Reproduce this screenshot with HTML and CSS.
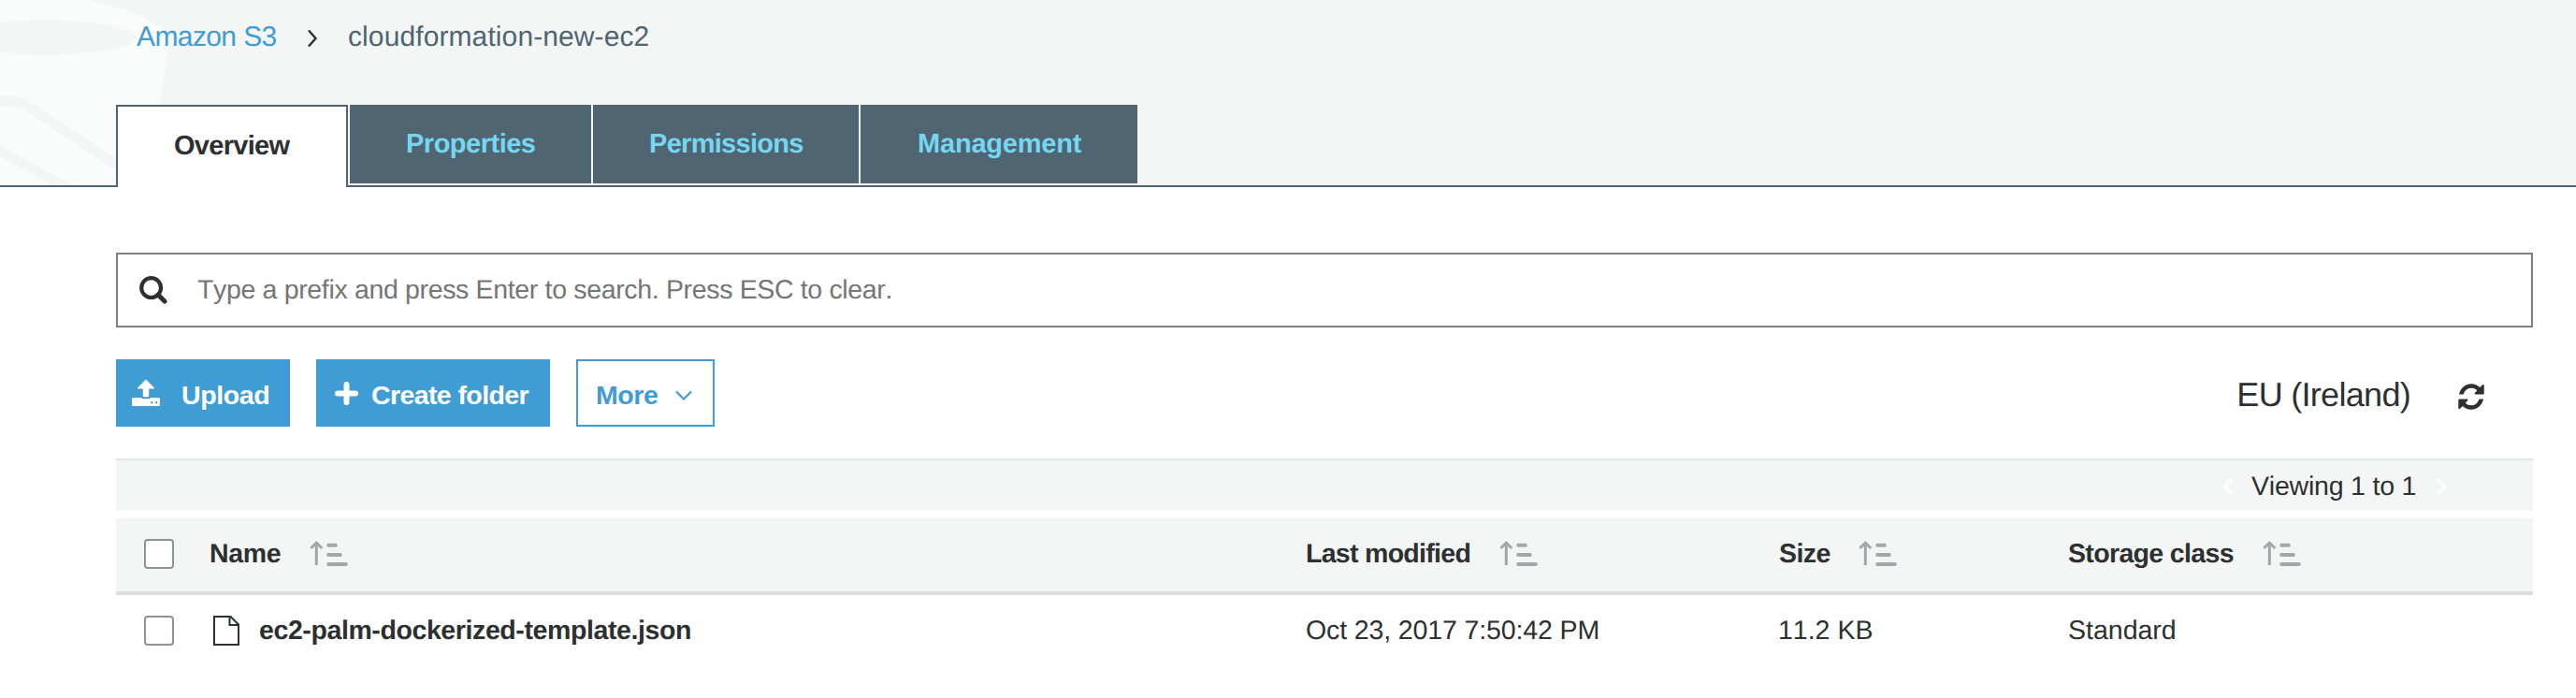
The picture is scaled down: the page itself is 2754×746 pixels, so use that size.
FILE: index.html
```html
<!DOCTYPE html>
<html lang="en">
<head>
<meta charset="utf-8">
<title>Amazon S3</title>
<link rel="stylesheet" href="styles.css">
</head>
<body>
<svg class="defs" width="0" height="0" aria-hidden="true">
  <symbol id="sort" viewBox="0 0 42 28">
    <path d="M7.3 2.5V26M1.3 8 7.3 2.2 13.3 8" fill="none" stroke="#a1a8a8" stroke-width="3"/>
    <path d="M20.2 4.7h7.6M20.2 14.9h12.6M20.2 25h18.6" fill="none" stroke="#a1a8a8" stroke-width="4" stroke-linecap="round"/>
  </symbol>
  <symbol id="arc" viewBox="0 0 28 28">
    <path fill="#2d3030" d="M1 11.5C2.500 4.500 8 .3 14 .3C17.500 .3 20.800 1.700 23.300 4L26 1.300Q27.700 .3 27.700 2V10.500Q27.700 11.500 26.700 11.500H18.500Q16.800 11.300 17.800 10L20.300 7.200C18.600 5.500 16.500 4.700 14 4.700C10.500 4.700 7.500 6.700 6.200 10Q5.700 11.500 5 11.500Z"/>
  </symbol>
</svg>
<header class="top">
  <svg class="bucket" width="190" height="198" viewBox="0 0 190 198" aria-hidden="true">
    <path d="M0 0H90C135 7 181 25 180.500 48L158 198H0Z" fill="#fafcfb"/>
    <ellipse cx="48" cy="40" rx="98" ry="18.200" fill="#f4f6f6"/>
    <path d="M-8 113Q12 101 32 115.500L140 186M-8 157 80 205" fill="none" stroke="#f4f6f6" stroke-width="10.500"/>
  </svg>
  <nav class="crumbs">
    <a class="crumb-link">Amazon S3</a>
    <svg class="crumb-sep" width="12" height="20" viewBox="0 0 12 20"><path d="M2 1.5 9.5 10 2 18.5" fill="none" stroke="#2d3030" stroke-width="2.4"/></svg>
    <span class="crumb-here">cloudformation-new-ec2</span>
  </nav>
  <nav class="tabs">
    <a class="tab active">Overview</a>
    <a class="tab props">Properties</a>
    <a class="tab perms">Permissions</a>
    <a class="tab mgmt">Management</a>
  </nav>
</header>
<main class="content">
  <div class="search">
    <svg width="30" height="30" viewBox="0 0 30 30"><circle cx="12.6" cy="12.6" r="10.4" fill="none" stroke="#2d3030" stroke-width="4.200"/><path d="M20 20 27 27" stroke="#2d3030" stroke-width="5" stroke-linecap="round"/></svg>
    <span class="hint">Type a prefix and press Enter to search. Press ESC to clear.</span>
  </div>
  <div class="actions">
    <button class="btn upload">
      <svg width="30" height="30" viewBox="0 0 30 30" fill="#fff"><path d="M15 0.500 24 9.500Q24.500 10.500 23 10.500H18.200V18Q18.200 19.300 17 19.300H13Q11.800 19.300 11.800 18V10.500H7Q5.500 10.500 6 9.500Z"/><path fill-rule="evenodd" d="M1.500 20H10Q10.500 21.300 12 21.300H18Q19.500 21.300 20 20H28.500Q30 20 30 21.500V27.500Q30 29 28.500 29H1.500Q0 29 0 27.500V21.500Q0 20 1.500 20ZM20.200 24.200V26.200H22.400V24.200ZM25 24.200V26.200H27.200V24.200Z"/></svg>
      <span>Upload</span>
    </button>
    <button class="btn create">
      <svg width="25" height="25" viewBox="0 0 25 25"><path d="M12.500 3V22M3 12.500H22" stroke="#fff" stroke-width="6" stroke-linecap="round"/></svg>
      <span>Create folder</span>
    </button>
    <button class="btn more">
      <span>More</span>
      <svg width="18" height="12" viewBox="0 0 18 12"><path d="M1 1.500 9 9.500 17 1.500" fill="none" stroke="#3f9cd4" stroke-width="2.200"/></svg>
    </button>
    <span class="region">EU (Ireland)</span>
    <svg class="refresh" width="28" height="28" viewBox="0 0 28 28"><use href="#arc" width="28" height="28"/><use href="#arc" width="28" height="28" transform="rotate(180 14 14)"/></svg>
  </div>
  <div class="pager">
    <svg width="12" height="20" viewBox="0 0 12 20"><path d="M10.500 1.500 2 10 10.500 18.500" fill="none" stroke="#fff" stroke-width="2.800"/></svg>
    <span class="viewing">Viewing 1 to 1</span>
    <svg width="12" height="20" viewBox="0 0 12 20"><path d="M1.500 1.500 10 10 1.500 18.500" fill="none" stroke="#fff" stroke-width="2.800"/></svg>
  </div>
  <div class="row head">
    <div class="cell first"><i class="check"></i><span class="h-name">Name</span><svg class="sort" width="42" height="28"><use href="#sort"/></svg></div>
    <div class="cell"><span class="h-mod">Last modified</span><svg class="sort" width="42" height="28"><use href="#sort"/></svg></div>
    <div class="cell"><span class="h-size">Size</span><svg class="sort" width="42" height="28"><use href="#sort"/></svg></div>
    <div class="cell"><span class="h-class">Storage class</span><svg class="sort" width="42" height="28"><use href="#sort"/></svg></div>
  </div>
  <div class="row item">
    <div class="cell first"><i class="check"></i>
      <svg class="file" width="28" height="32" viewBox="0 0 28 32" fill="none" stroke="#2d3030" stroke-width="2"><path d="M1 1H18.500L27 9.500V31H1Z"/><path d="M17.500 1V10H27"/></svg>
      <span class="filename">ec2-palm-dockerized-template.json</span></div>
    <div class="cell"><span class="v-mod">Oct 23, 2017 7:50:42 PM</span></div>
    <div class="cell"><span class="v-size">11.2 KB</span></div>
    <div class="cell"><span class="v-class">Standard</span></div>
  </div>
</main>
</body>
</html>
```
FILE: styles.css
```css
* { box-sizing: border-box; }
body {
  margin: 0;
  background: #fff;
  color: #2d3030;
  font: 28.5px/34px "Liberation Sans", Arial, sans-serif;
  font-kerning: none;
  text-rendering: geometricPrecision;
}
svg { display: block; flex: none; }
span, a { white-space: nowrap; }
.defs { position: absolute; }

.top {
  position: relative;
  height: 200px;
  background: #f4f6f6;
  border-bottom: 2px solid #4f6572;
}
.bucket { position: absolute; left: 0; top: 0; }
.crumbs {
  position: relative;
  display: flex;
  align-items: center;
  height: 112px;
  padding: 0 0 32px 146px;
  font-size: 30px;
}
.crumb-link { width: 182px; color: #3f9cd4; letter-spacing: -.6px; }
.crumb-sep { margin-top: 2px; }
.crumb-here { margin-left: 32px; color: #4f6572; letter-spacing: .1px; }
.tabs {
  position: relative;
  display: flex;
  gap: 2px;
  padding-left: 124px;
  font-size: 29px;
  font-weight: bold;
}
.tab {
  height: 84px;
  padding: 25px 0 0 60px;
  background: #4f6572;
  color: #75d7f1;
}
.tab.active {
  width: 248px;
  height: 88px;
  padding-top: 25px;
  border: 2px solid #4f6572;
  border-bottom: 0;
  background: #fff;
  color: #2d3030;
  letter-spacing: -.7px;
}
.props { width: 258px; letter-spacing: -.5px; }
.perms { width: 284px; letter-spacing: -.7px; }
.mgmt { width: 296px; padding-left: 61px; letter-spacing: -.2px; }

.content { padding: 70px 46px 0 124px; }
.search {
  display: flex;
  align-items: center;
  height: 80px;
  padding-left: 23px;
  border: 2px solid gray;
}
.hint { margin-left: 32px; color: #757575; letter-spacing: -.34px; }
.actions {
  display: flex;
  align-items: center;
  height: 72px;
  margin: 34px 0;
}
.btn {
  display: flex;
  align-items: center;
  height: 72px;
  padding: 0;
  border: 0;
  background: #3f9cd4;
  color: #fff;
  font: inherit;
  font-weight: bold;
}
.btn span { padding-top: 4px; }
.upload { width: 186px; padding-left: 17px; letter-spacing: -.4px; }
.upload span { margin-left: 23px; }
.create { width: 250px; margin-left: 28px; padding-left: 20px; letter-spacing: -.6px; }
.create span { margin-left: 14px; }
.more {
  width: 148px;
  margin-left: 28px;
  padding-left: 19px;
  border: 2px solid #3f9cd4;
  background: #fff;
  color: #3f9cd4;
  letter-spacing: -.4px;
}
.more svg { margin: 6px 0 0 18px; }
.region { margin-left: auto; padding-top: 3px; font-size: 36px; letter-spacing: -.7px; }
.refresh { margin: 8px 52px 0 51px; }
.pager {
  display: flex;
  justify-content: flex-end;
  align-items: center;
  height: 56px;
  padding: 2px 92px 0 0;
  border-top: 2px solid #e3e5e5;
  background: #f4f6f6;
}
.viewing { width: 197px; margin: 0 0 0 19px; letter-spacing: -.2px; }
.row {
  display: grid;
  grid-template-columns: 1272px 505px 310px 1fr;
  height: 82px;
}
.head {
  margin-top: 8px;
  padding-bottom: 2px;
  border-bottom: 4px solid #ddd;
  background: #f4f6f6;
  font-weight: bold;
}
.item { height: 76px; }
.cell { display: flex; align-items: center; }
.first { padding-left: 30px; }
.check {
  width: 32px;
  height: 32px;
  border: 2px solid #8c9494;
  border-radius: 4px;
  background: #fff;
}
.h-name { width: 107px; margin-left: 38px; letter-spacing: -.3px; }
.h-mod { width: 207px; letter-spacing: -.7px; }
.h-size { width: 86px; padding-left: 1px; letter-spacing: -.6px; }
.h-class { width: 208px; letter-spacing: -.65px; }
.file { margin-left: 42px; }
.filename { margin-left: 21px; font-weight: bold; letter-spacing: -.4px; }
.v-mod { letter-spacing: -.12px; }
.v-class { letter-spacing: 0; }
```
